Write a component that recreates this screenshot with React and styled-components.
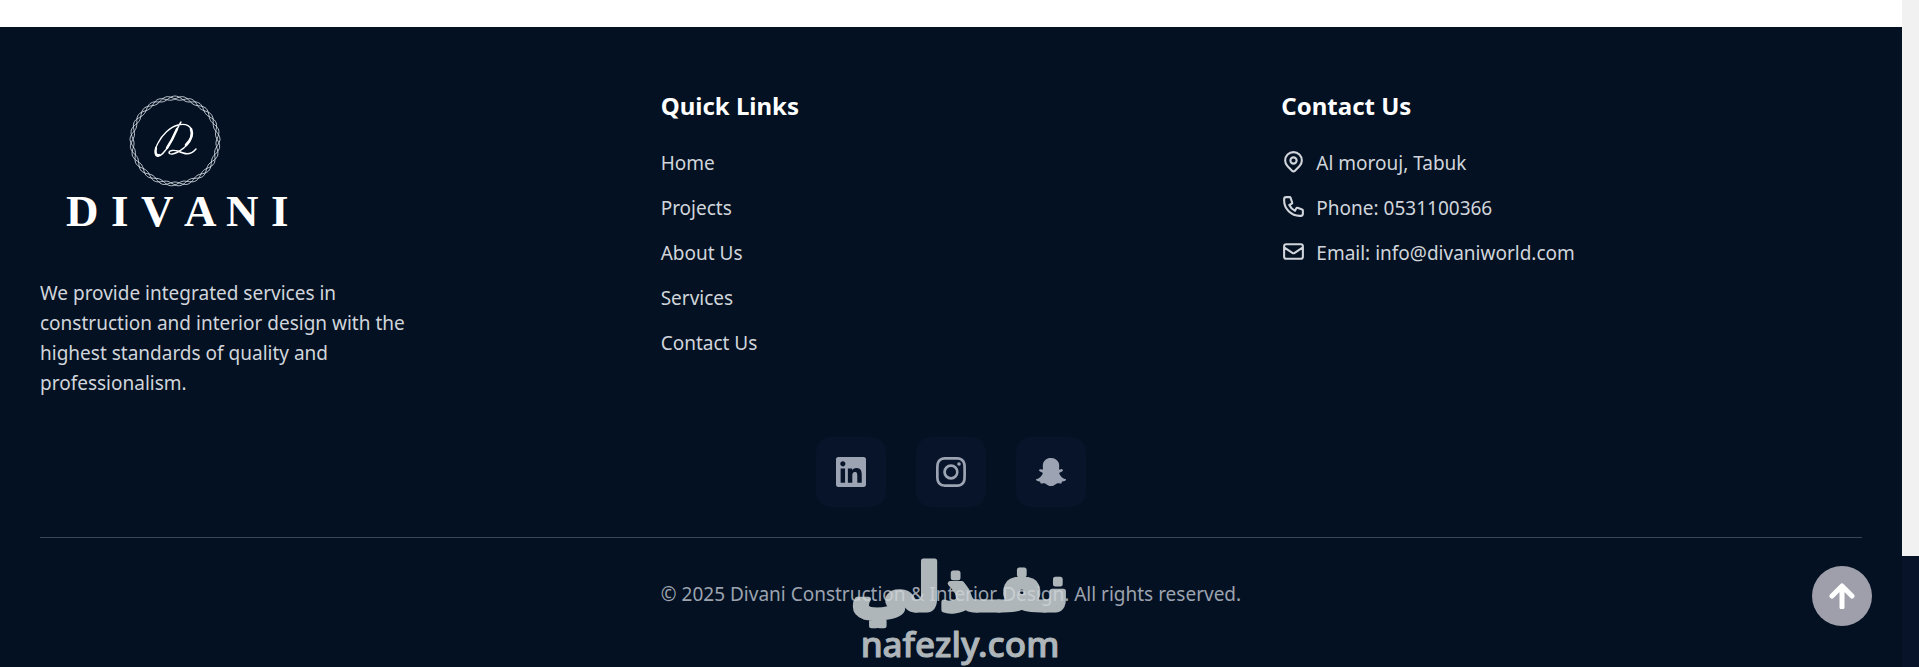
import React from "react";
import styled, { createGlobalStyle } from "styled-components";
import {
  HiOutlineLocationMarker,
  HiOutlinePhone,
  HiOutlineMail,
} from "react-icons/hi";
import { BsInstagram } from "react-icons/bs";
import { FaLinkedin, FaSnapchatGhost } from "react-icons/fa";

const GlobalStyle = createGlobalStyle`
  *, *::before, *::after { box-sizing: border-box; }
  body {
    margin: 0;
    background: #ffffff;
    font-family: "Segoe UI", "Noto Sans", "Open Sans", sans-serif;
  }
  h2, p, ul { margin: 0; padding: 0; }
  ul { list-style: none; }
`;

const Page = styled.div`
  display: flex;
  min-height: 100vh;
`;

const Content = styled.div`
  position: relative;
  flex: 1;
  min-width: 0;
  display: flex;
  flex-direction: column;
  padding-top: 27px;
`;

const Rail = styled.div`
  flex: none;
  width: 17px;
  display: grid;
  grid-template-rows: 5fr 1fr;
  background: #081229;
`;

const RailTrack = styled.div`
  background: #f1f1f1;
`;

const Footer = styled.footer`
  flex: 1;
  padding: 60px 40px 0;
  background: #031122;
  color: #d1d5db;
  font-size: 19px;
  line-height: 30px;
`;

const Columns = styled.div`
  display: grid;
  grid-template-columns: repeat(3, 1fr);
  gap: 40px;
`;

const Logo = styled.svg`
  display: block;
  width: 270px;
  height: 170px;
  margin-bottom: 21px;
`;

const About = styled.p`
  max-width: 384px;
`;

const Heading = styled.h2`
  margin-bottom: 23px;
  color: #ffffff;
  font-size: 24px;
  line-height: 38px;
  font-weight: 700;
`;

const List = styled.ul`
  display: flex;
  flex-direction: column;
  gap: 15px;
`;

const TextLink = styled.a`
  color: inherit;
  text-decoration: none;
`;

const ContactItem = styled.li`
  display: flex;
  align-items: flex-start;
  gap: 10px;

  svg {
    flex: none;
    width: 25px;
    height: 25px;
    margin-top: 1px;
  }
`;

const Socials = styled.nav`
  display: flex;
  justify-content: center;
  gap: 30px;
  margin-top: 39px;
  padding-bottom: 30px;
  border-bottom: 1px solid #3b4655;
`;

const SocialLink = styled.a`
  display: flex;
  padding: 20px;
  border-radius: 15px;
  background: #071429;
  color: #9ca3b3;

  svg {
    width: 30px;
    height: 30px;
  }
`;

const Legal = styled.div`
  position: relative;
  padding: 41px 0 57px;
  text-align: center;
  color: #9ca3af;
`;

const Watermark = styled.svg`
  position: absolute;
  top: 16px;
  left: 50%;
  width: 230px;
  height: 113px;
  margin-left: -106px;
  overflow: visible;
  opacity: 0.84;
  pointer-events: none;
`;

const TopButton = styled.button`
  position: absolute;
  right: 30px;
  bottom: 41px;
  width: 60px;
  height: 60px;
  padding: 0;
  display: grid;
  place-items: center;
  border: 0;
  border-radius: 50%;
  background: #9f9fab;
  color: #ffffff;
`;

const LINKS = ["Home", "Projects", "About Us", "Services", "Contact Us"];

const CONTACTS = [
  { Icon: HiOutlineLocationMarker, text: "Al morouj, Tabuk" },
  { Icon: HiOutlinePhone, text: "Phone: 0531100366" },
  { Icon: HiOutlineMail, text: "Email: info@divaniworld.com" },
];

// Each viewBox crops the glyph so that it fills its tile's 30px box.
const SOCIALS = [
  { Icon: FaLinkedin, label: "LinkedIn", viewBox: "0 32 448 448" },
  { Icon: BsInstagram, label: "Instagram", viewBox: "0 0 16 16" },
  { Icon: FaSnapchatGhost, label: "Snapchat", viewBox: "0 0 512 512" },
];

// Closed wavy ring: the radius swings around `radius` as the angle turns.
const ring = (phase, waves = 11, radius = 43, swing = 2) => {
  const points = [];
  for (let i = 0; i < 360; i += 2) {
    const a = (i * Math.PI) / 180;
    const r = radius + swing * Math.sin(waves * a + phase);
    points.push(
      `${(135 + r * Math.cos(a)).toFixed(1)} ${(54 + r * Math.sin(a)).toFixed(1)}`
    );
  }
  return `M${points.join("L")}Z`;
};

function DivaniLogo() {
  return (
    <Logo viewBox="0 0 270 170" role="img" aria-label="Divani">
      <g fill="none" stroke="#e8eef5" strokeWidth="0.8">
        {[0, 2.1, 4.2].map((phase) => (
          <path key={phase} d={ring(phase)} />
        ))}
      </g>
      <g fill="none" stroke="#ffffff" strokeLinecap="round" strokeLinejoin="round">
        <path
          strokeWidth="1.4"
          d="M141 35C137 41 133 52 129 58C125 65 120 70 117 69C114 68 115 61 118 56C122 48 130 40 138 38C146 36 152 39 152 46C152 54 145 61 138 65C134 67 130 68 129 66C129 63 134 63 138 64C144 67 150 69 156 62"
        />
        <path strokeWidth="2.4" d="M137 42C134 49 131 55 127 61" />
        <path strokeWidth="2.6" d="M151 42C153 47 151 53 146 58" />
        <path strokeWidth="2.2" d="M116 61C115 66 116 69 119 68" />
      </g>
      <text
        x="26 71 101 144 186 231"
        y="139"
        fill="#ffffff"
        fontFamily='"Liberation Serif", serif'
        fontWeight="700"
        fontSize="45"
      >
        DIVANI
      </text>
    </Logo>
  );
}

function NafezlyMark() {
  return (
    <Watermark viewBox="0 0 230 113" aria-hidden="true">
      <g fill="#d0d6d8" stroke="#d0d6d8" strokeLinejoin="round" textAnchor="middle">
        <text
          x="115"
          y="56"
          direction="rtl"
          fontFamily='"DejaVu Sans", sans-serif'
          fontWeight="700"
          fontSize="64"
          strokeWidth="5"
        >
          نفـذلي
        </text>
        <text
          x="115"
          y="103"
          fontFamily='"Noto Sans", sans-serif'
          fontWeight="500"
          fontSize="35"
          strokeWidth="1"
        >
          nafezly.com
        </text>
      </g>
    </Watermark>
  );
}

export default function App() {
  return (
    <Page>
      <GlobalStyle />
      <Content>
        <Footer>
          <Columns>
            <div>
              <DivaniLogo />
              <About>
                We provide integrated services in construction and interior
                design with the highest standards of quality and
                professionalism.
              </About>
            </div>
            <div>
              <Heading>Quick Links</Heading>
              <List>
                {LINKS.map((label) => (
                  <li key={label}>
                    <TextLink href="#">{label}</TextLink>
                  </li>
                ))}
              </List>
            </div>
            <div>
              <Heading>Contact Us</Heading>
              <List>
                {CONTACTS.map(({ Icon, text }) => (
                  <ContactItem key={text}>
                    <Icon />
                    <span>{text}</span>
                  </ContactItem>
                ))}
              </List>
            </div>
          </Columns>
          <Socials aria-label="Social media">
            {SOCIALS.map(({ Icon, label, viewBox }) => (
              <SocialLink key={label} href="#" aria-label={label}>
                <Icon viewBox={viewBox} />
              </SocialLink>
            ))}
          </Socials>
          <Legal>
            <p>© 2025 Divani Construction &amp; Interior Design. All rights reserved.</p>
            <NafezlyMark />
          </Legal>
        </Footer>
        <TopButton type="button" aria-label="Back to top">
          <svg width="26" height="26" viewBox="0 0 26 26" fill="none" stroke="currentColor" strokeWidth="5" strokeLinecap="round" strokeLinejoin="round">
            <path d="M13 24V4M3 13L13 3L23 13" />
          </svg>
        </TopButton>
      </Content>
      <Rail aria-hidden="true">
        <RailTrack />
      </Rail>
    </Page>
  );
}
